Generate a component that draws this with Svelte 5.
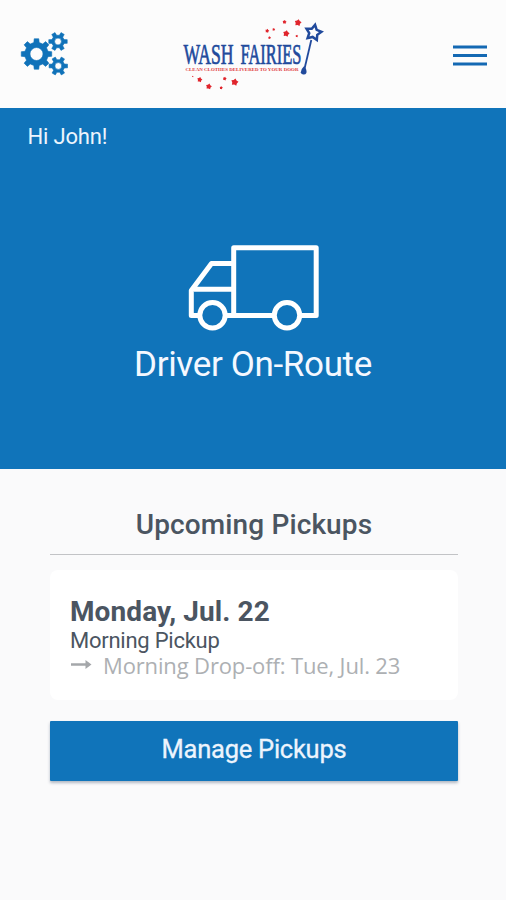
<script lang="ts">
	export let userName = 'John';
	export let status = 'Driver On-Route';

	const pickup = {
		date: 'Monday, Jul. 22',
		slot: 'Morning Pickup',
		dropOff: 'Morning Drop-off: Tue, Jul. 23'
	};

	const polar = (cx: number, cy: number, r: number, angle: number) =>
		`${(cx + r * Math.cos(angle)).toFixed(2)} ${(cy + r * Math.sin(angle)).toFixed(2)}`;

	function gear(cx: number, cy: number, outer: number, inner: number, hole: number, teeth: number) {
		const step = (Math.PI * 2) / teeth;
		const points: string[] = [];
		for (let i = 0; i < teeth; i++) {
			const a = i * step;
			points.push(polar(cx, cy, inner, a - step * 0.29));
			points.push(polar(cx, cy, outer, a - step * 0.19));
			points.push(polar(cx, cy, outer, a + step * 0.19));
			points.push(polar(cx, cy, inner, a + step * 0.29));
		}
		return `M${points.join('L')}ZM${cx - hole} ${cy}a${hole} ${hole} 0 1 0 ${hole * 2} 0a${hole} ${hole} 0 1 0 ${-hole * 2} 0Z`;
	}

	function star(cx: number, cy: number, outer: number, inner: number, turn = 0) {
		const points: string[] = [];
		for (let i = 0; i < 10; i++) {
			points.push(polar(cx, cy, i % 2 ? inner : outer, turn - Math.PI / 2 + (i * Math.PI) / 5));
		}
		return `M${points.join('L')}Z`;
	}

	const gears = [
		gear(16.5, 23, 15.4, 11.8, 6.5, 8),
		gear(38, 10.5, 9.4, 6.4, 3.4, 6),
		gear(38.3, 35, 9.4, 6.4, 3.4, 6)
	];

	// x, y, radius
	const sparkles = [
		[114.5, 4, 2.1], [128, 4.7, 3.6], [97.2, 12.9, 2.1], [103.7, 11.5, 1.5],
		[116.2, 15.6, 3.4], [126.8, 18, 1.4], [99.5, 19.7, 1.5],
		[22.8, 58.5, 0.8], [29.7, 61.7, 2.7], [38.8, 68.5, 3.1], [54.7, 60.7, 2],
		[64.7, 64.2, 3.8], [51.2, 69.8, 1.7]
	];
</script>

<div class="screen">
	<header>
		<button class="icon-btn" aria-label="Settings">
			<svg width="50" height="48" viewBox="0 0 50 48">
				{#each gears as d}
					<path {d} fill="#1072b9" fill-rule="evenodd" stroke="#1072b9" stroke-width="0.6" stroke-linejoin="round" />
				{/each}
			</svg>
		</button>

		<svg class="logo" width="155" height="78" viewBox="0 0 155 78" role="img" aria-label="Wash Fairies">
			{#each sparkles as [x, y, r]}
				<path d={star(x, y, r, r * 0.65, 0.2)} fill="#e0252c" />
			{/each}
			<text class="logo__name" x="13.5" y="45.5" textLength="50" lengthAdjust="spacingAndGlyphs">WASH</text>
			<text class="logo__name" x="70.5" y="45.5" textLength="61" lengthAdjust="spacingAndGlyphs">FAIRIES</text>
			<text class="logo__tag" x="15.5" y="52.8" textLength="113" lengthAdjust="spacingAndGlyphs">CLEAN CLOTHES DELIVERED TO YOUR DOOR</text>
			<path d={star(143.5, 14.7, 8, 4.3, 0.2)} fill="none" stroke="#214a9c" stroke-width="2.5" />
			<path d="M141.3 22 134 53" stroke="#214a9c" stroke-width="1.8" />
			<path d="M134.2 48q3 4 2.2 7a3 3 0 0 1-5.600-.8q0-3 3.400-6.200z" fill="#214a9c" />
		</svg>

		<button class="icon-btn" aria-label="Menu">
			<svg width="34" height="22" viewBox="0 0 34 22">
				<path d="M0 2h34M0 10.5h34M0 19h34" stroke="#1469b3" stroke-width="3" />
			</svg>
		</button>
	</header>

	<section class="status">
		<p class="greeting">Hi {userName}!</p>
		<svg class="truck" width="132" height="88" viewBox="0 0 132 88" fill="none" stroke="#fff" stroke-width="5" stroke-linejoin="round">
			<path d="M46.7 71.5V3.8h82.5v67.7H113M87 71.5H39M46.7 19.5H24.5L4.3 46.5v25H12M7 45.2h39" />
			<circle cx="25.5" cy="71.2" r="12.7" />
			<circle cx="100" cy="71.2" r="12.7" />
		</svg>
		<h1>{status}</h1>
	</section>

	<main>
		<h2><span>Upcoming Pickups</span></h2>
		<article>
			<h3>{pickup.date}</h3>
			<p class="slot">{pickup.slot}</p>
			<p class="drop-off">
				<svg width="22" height="12" viewBox="0 0 22 12">
					<path d="M1 4.5h16" stroke="#a4a7aa" stroke-width="2.5" />
					<path d="M15.5 0 21.5 4.5l-6 4.500z" fill="#a4a7aa" />
				</svg>
				<span>{pickup.dropOff}</span>
			</p>
		</article>
		<button class="manage"><span>Manage Pickups</span></button>
	</main>
</div>

<style>
	:global(body) {
		margin: 0;
		background: #fafafb;
	}

	.screen {
		height: 900px;
		background: #fafafb;
		font-family: Roboto, sans-serif;
		color: #4b5561;
	}

	header {
		height: 108px;
		box-sizing: border-box;
		padding: 0 19px 0 20px;
		display: grid;
		grid-template-columns: 50px 1fr 34px;
		align-items: start;
		background: #fcfcfc;
	}

	button {
		border: 0;
		padding: 0;
		font-family: inherit;
	}

	svg {
		display: block;
	}

	.icon-btn {
		background: none;
		margin-top: 31px;
	}

	.icon-btn:last-child {
		margin-top: 44.5px;
	}

	.logo {
		margin: 18px 0 0 100px;
	}

	.logo__name {
		font-family: 'Liberation Serif', serif;
		font-size: 29px;
		fill: #214a9c;
		stroke: #214a9c;
		stroke-width: 0.7px;
	}

	.logo__tag {
		font-family: 'Liberation Serif', serif;
		font-size: 5px;
		font-weight: bold;
		fill: #df3b3d;
	}

	.status {
		height: 361px;
		display: flex;
		flex-direction: column;
		align-items: center;
		background: #1074ba;
		color: #fff;
	}

	p,
	h1,
	h2,
	h3 {
		margin: 0;
	}

	.greeting {
		align-self: flex-start;
		margin: 16px 0 0 27.5px;
		font-size: 22px;
		line-height: 26px;
		letter-spacing: -0.18px;
		color: #edf4fd;
	}

	.truck {
		margin-top: 94px;
	}

	h1 {
		margin-top: 12px;
		font-size: 35px;
		font-weight: 400;
		line-height: 42px;
		letter-spacing: -0.35px;
		color: #f4f8ff;
	}

	main {
		padding: 0 48px 0 50px;
	}

	h2 {
		padding: 39px 0 13px;
		border-bottom: 1px solid #c2c3c6;
		font-size: 28px;
		font-weight: 500;
		line-height: 33px;
		letter-spacing: 0.12px;
		text-align: center;
	}

	article {
		height: 130px;
		box-sizing: border-box;
		margin-top: 15px;
		padding: 25px 20px 0;
		border-radius: 8px;
		background: #fff;
	}

	h3 {
		font-size: 28px;
		font-weight: 700;
		line-height: 34px;
		letter-spacing: 0.1px;
	}

	.slot {
		font-size: 22px;
		line-height: 24px;
		letter-spacing: -0.25px;
	}

	.drop-off {
		display: flex;
		align-items: center;
		gap: 11px;
		font-family: 'Open Sans', sans-serif;
		font-size: 22px;
		line-height: 25px;
		letter-spacing: -0.14px;
		color: #adb0b3;
		white-space: nowrap;
	}

	.manage {
		display: block;
		width: 100%;
		height: 60px;
		margin-top: 21px;
		padding-bottom: 4px;
		border-radius: 1px;
		background: #1074ba;
		box-shadow: 0 2px 3px rgba(40, 60, 90, 0.35);
		color: #edf4fd;
		font-size: 25.5px;
		letter-spacing: -0.25px;
		-webkit-text-stroke: 0.3px #edf4fd;
	}
</style>
